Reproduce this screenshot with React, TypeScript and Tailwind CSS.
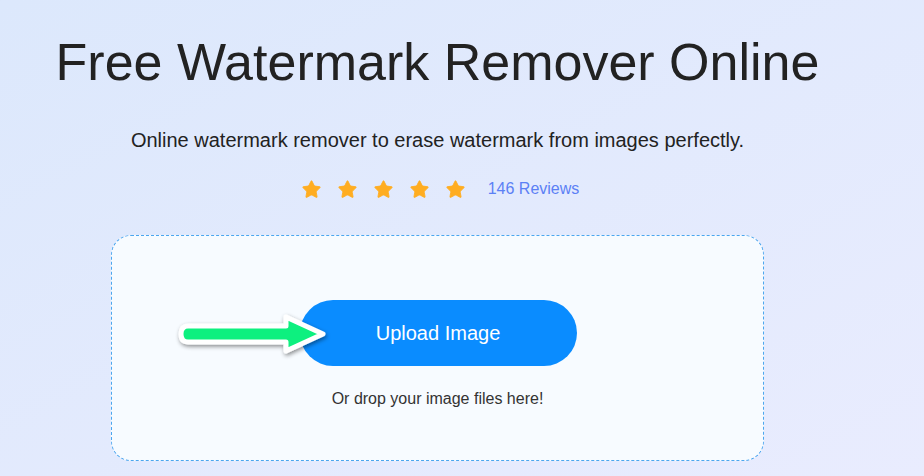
import { Star } from 'lucide-react';

function GreenArrow() {
  return (
    <svg width="160" height="60" viewBox="0 0 160 60" className="absolute left-[174px] top-[305px]">
      <defs>
        <filter id="sh" x="-20%" y="-40%" width="140%" height="180%">
          <feDropShadow dx="1" dy="2" stdDeviation="2" floodColor="#000" floodOpacity="0.45" />
        </filter>
      </defs>
      <path
        d="M14 21 H112 V12 L149 29 L112 46 V37 H14 Q7 37 7 29 Q7 21 14 21 Z"
        fill="#0cf07f"
        stroke="#ffffff"
        strokeWidth="5"
        strokeLinejoin="round"
        filter="url(#sh)"
      />
    </svg>
  );
}

export default function App() {
  return (
    <div className="relative w-[924px] h-[476px] overflow-hidden bg-gradient-to-br from-[#dce8fc] to-[#e9ecfe] font-['Liberation_Sans',Arial,sans-serif]">
      <div className="w-[875px] flex flex-col items-center">
        <h1 className="mt-[32px] text-[52px] leading-[60px] text-[#222222] whitespace-nowrap">
          Free Watermark Remover Online
        </h1>
        <p className="mt-[35px] text-[20px] leading-[26px] text-[#222222]">
          Online watermark remover to erase watermark from images perfectly.
        </p>
        <div className="mt-[24px] ml-[5px] flex items-center">
          <div className="flex gap-[15px]">
            {[0, 1, 2, 3, 4].map(i => (
              <Star key={i} size={21} fill="#ffad21" stroke="#ffad21" strokeWidth={1} />
            ))}
          </div>
          <span className="ml-[22px] text-[16px] text-[#5b80f5]">146 Reviews</span>
        </div>
        <div className="mt-[34px] w-[653px] h-[226px] rounded-[20px] border border-dashed border-[#4ba6ef] bg-[#f7fbff] flex flex-col items-center">
          <button className="mt-[64px] ml-[1px] w-[277px] h-[66px] rounded-full bg-[#0a8cff] text-white text-[20px]">
            Upload Image
          </button>
          <p className="mt-[21px] text-[16px] text-[#333333]">Or drop your image files here!</p>
        </div>
      </div>
      <GreenArrow />
    </div>
  );
}
